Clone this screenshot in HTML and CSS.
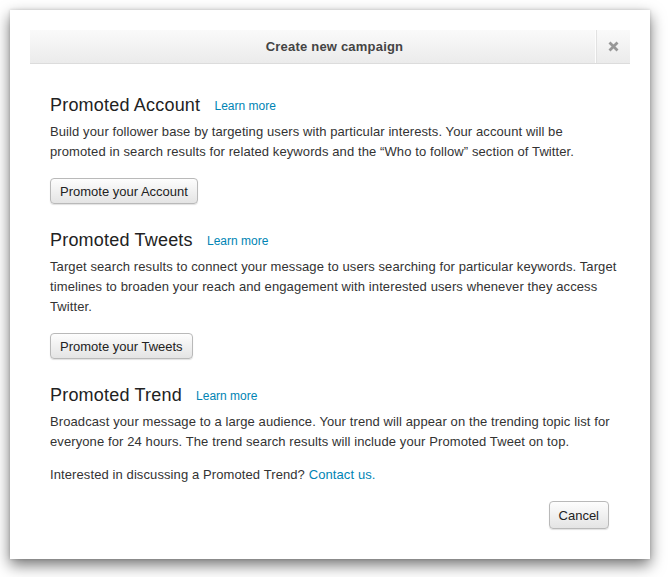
FILE: index.html
```html
<!DOCTYPE html>
<html>
<head>
<meta charset="utf-8">
<link rel="stylesheet" href="styles.css">
</head>
<body>
<div class="window">
  <div class="modal">
    <div class="modal-header">
      <div class="modal-title">Create new campaign</div>
      <button class="close-btn" aria-label="Close">
        <svg width="11" height="11" viewBox="0 0 11 11"><path d="M1.5 1.5 L9.5 9.5 M9.5 1.5 L1.5 9.5" stroke="#979797" stroke-width="2.8" stroke-linecap="butt"/></svg>
      </button>
    </div>
    <div class="modal-body">
      <section class="promo">
        <h2 class="promo-title">Promoted Account <a class="learn" href="#">Learn more</a></h2>
        <p class="promo-text">Build your follower base by targeting users with particular interests. Your account will be promoted in search results for related keywords and the “Who to follow” section of Twitter.</p>
        <button class="btn">Promote your Account</button>
      </section>
      <section class="promo">
        <h2 class="promo-title">Promoted Tweets <a class="learn" href="#">Learn more</a></h2>
        <p class="promo-text">Target search results to connect your message to users searching for particular keywords. Target timelines to broaden your reach and engagement with interested users whenever they access Twitter.</p>
        <button class="btn">Promote your Tweets</button>
      </section>
      <section class="promo">
        <h2 class="promo-title">Promoted Trend <a class="learn" href="#">Learn more</a></h2>
        <p class="promo-text">Broadcast your message to a large audience. Your trend will appear on the trending topic list for everyone for 24 hours. The trend search results will include your Promoted Tweet on top.</p>
        <p class="promo-note">Interested in discussing a Promoted Trend? <a class="link" href="#">Contact us.</a></p>
      </section>
    </div>
    <div class="modal-footer">
      <button class="btn btn-cancel">Cancel</button>
    </div>
  </div>
</div>
</body>
</html>
```

FILE: styles.css
```css
html, body {
  margin: 0;
  padding: 0;
  background: #ffffff;
}

body {
  font-family: "Liberation Sans", Arial, Helvetica, sans-serif;
  color: #333;
  width: 668px;
  height: 577px;
  overflow: hidden;
}

.window {
  margin: 10px 0 0 10px;
  width: 640px;
  height: 549px;
  background: #fff;
  box-sizing: border-box;
  padding: 20px;
  box-shadow: 0 6px 14px rgba(0, 0, 0, 0.55), 0 0 3px rgba(0, 0, 0, 0.15);
}

.modal {
  display: flex;
  flex-direction: column;
  height: 100%;
}

.modal-header {
  height: 34px;
  box-sizing: border-box;
  display: flex;
  align-items: stretch;
  background: linear-gradient(#fafafa, #ebebeb);
  border-bottom: 1px solid #dcdcdc;
}

.modal-title {
  flex: 1;
  display: flex;
  align-items: center;
  justify-content: center;
  padding-left: 44px;
  font-size: 13px;
  font-weight: bold;
  letter-spacing: 0.2px;
  color: #444;
}

.close-btn {
  width: 35px;
  border: 0;
  border-left: 1px solid #fdfdfd;
  box-shadow: inset 1px 0 0 #e2e2e2;
  background: transparent;
  padding: 0;
  display: flex;
  align-items: center;
  justify-content: center;
}

.modal-body {
  padding: 30px 10px 0 20px;
}

.promo {
  margin-bottom: 25px;
}

.promo:last-child {
  margin-bottom: 0;
}

.promo-title {
  margin: 0 0 5px;
  font-size: 18px;
  line-height: 22px;
  font-weight: normal;
  letter-spacing: 0.2px;
  color: #222;
}

.learn {
  margin-left: 9px;
  font-size: 12px;
  letter-spacing: 0;
  color: #0084b4;
  text-decoration: none;
  vertical-align: 1px;
}

.promo-text {
  margin: 0;
  font-size: 13px;
  line-height: 20px;
  letter-spacing: 0.1px;
  color: #333;
}

.promo-note {
  margin: 13px 0 0;
  font-size: 13px;
  line-height: 20px;
  letter-spacing: 0.1px;
  color: #333;
}

.link {
  color: #0084b4;
  text-decoration: none;
}

.btn {
  margin-top: 16px;
  height: 26px;
  padding: 0 9px;
  font-family: "Liberation Sans", Arial, Helvetica, sans-serif;
  font-size: 13px;
  color: #222;
  background: linear-gradient(#fdfdfd, #e4e4e4);
  border: 1px solid #b9b9b9;
  border-radius: 4px;
  box-shadow: 0 1px 1px rgba(0, 0, 0, 0.12);
}

.modal-footer {
  display: flex;
  justify-content: flex-end;
  padding: 0 21px 0 0;
  margin-top: 1px;
}

.btn-cancel {
  margin-top: 15px;
  height: 28px;
  padding: 0 9px;
}
```
